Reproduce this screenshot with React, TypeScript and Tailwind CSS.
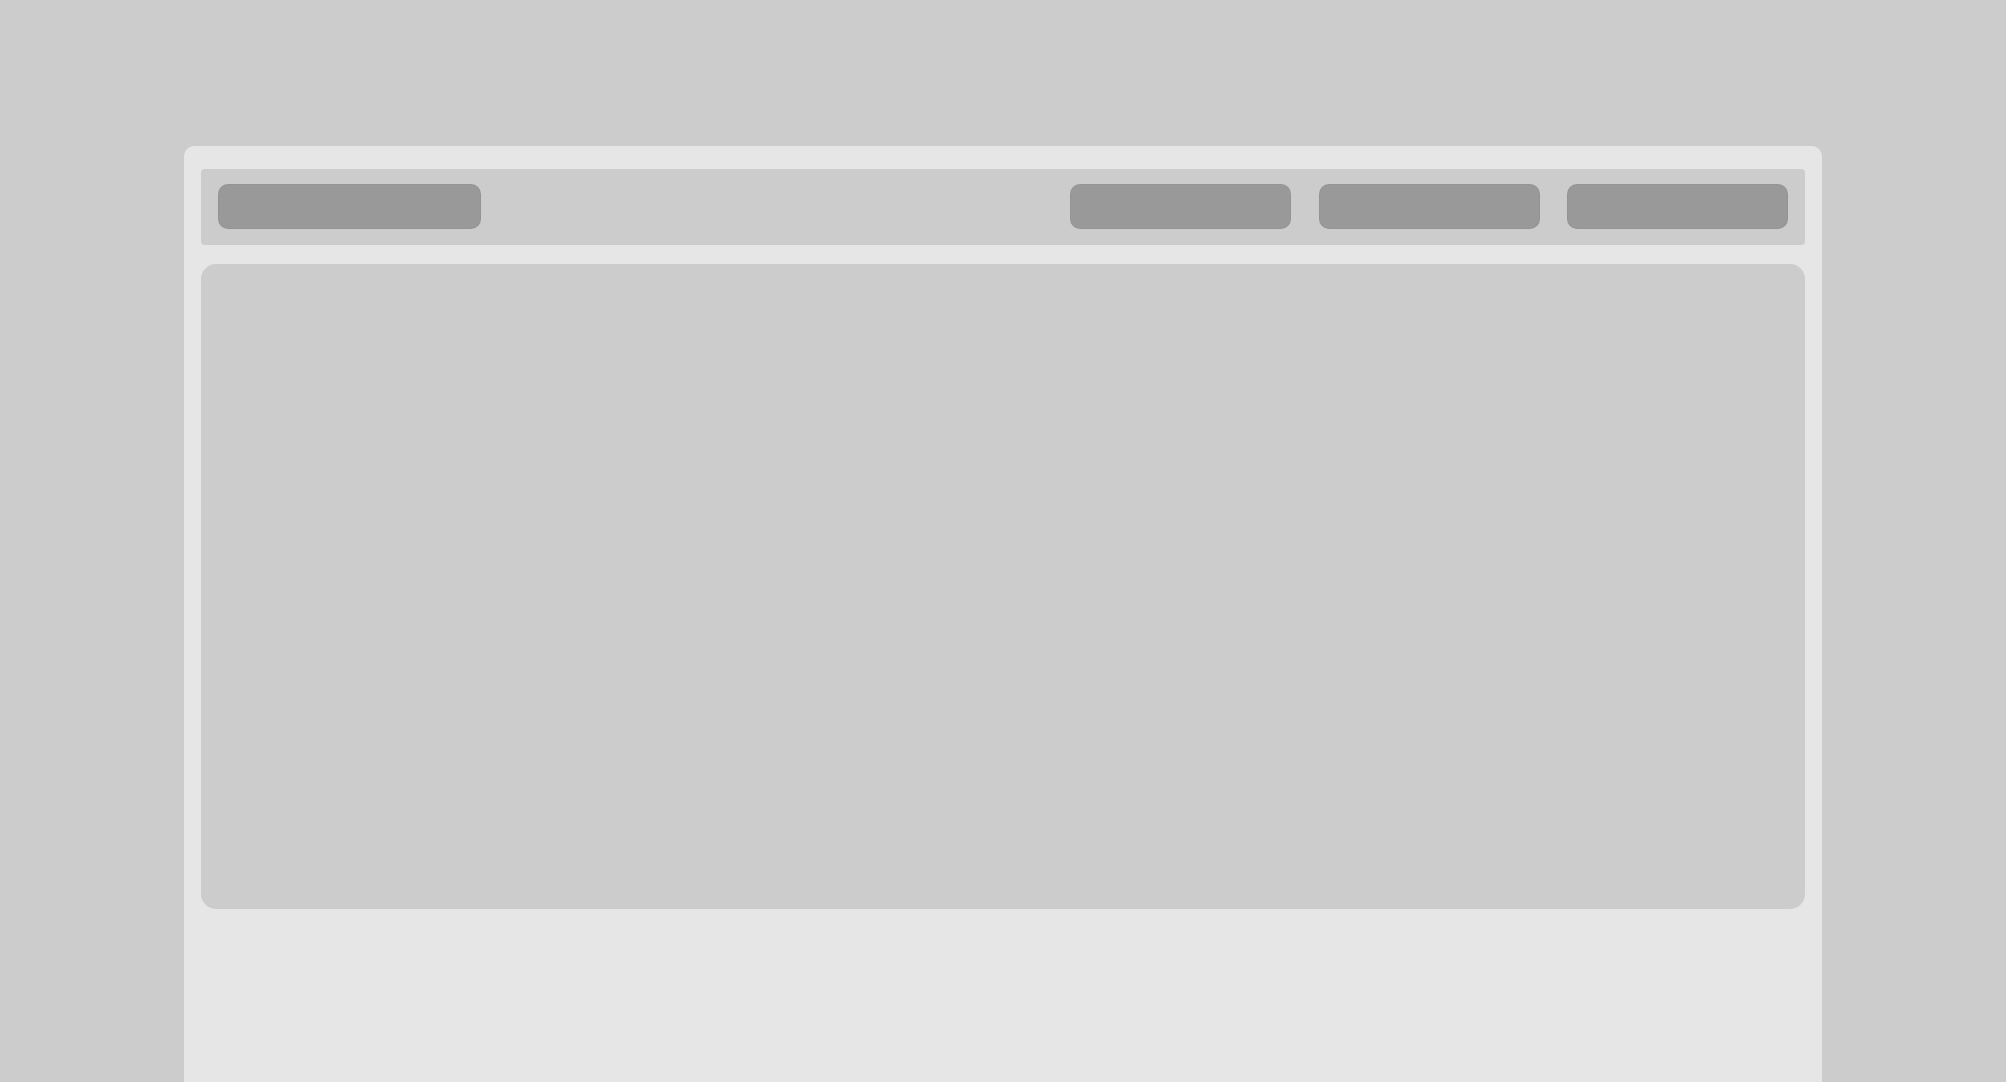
export default function App() {
  return (
    <div className="flex h-screen w-full justify-center overflow-hidden bg-[#cccccc] pt-[146px]">
      <div className="flex w-[1638px] flex-col rounded-t-[10px] bg-[#e6e6e6] px-[17px] pt-[23px]">
        <header className="flex h-[76px] shrink-0 items-start rounded-[4px] bg-[#cccccc] px-[17px] pt-[15px]">
          <div className="h-[45px] w-[263px] rounded-[10px] border border-black/[0.03] bg-[#999999]" />
          <nav className="ml-auto flex gap-[27.5px]">
            <div className="h-[45px] w-[221px] rounded-[10px] border border-black/[0.03] bg-[#999999]" />
            <div className="h-[45px] w-[221px] rounded-[10px] border border-black/[0.03] bg-[#999999]" />
            <div className="h-[45px] w-[221px] rounded-[10px] border border-black/[0.03] bg-[#999999]" />
          </nav>
        </header>
        <main className="mt-[19px] h-[645px] shrink-0 rounded-[15px] bg-[#cccccc]" />
      </div>
    </div>
  )
}
